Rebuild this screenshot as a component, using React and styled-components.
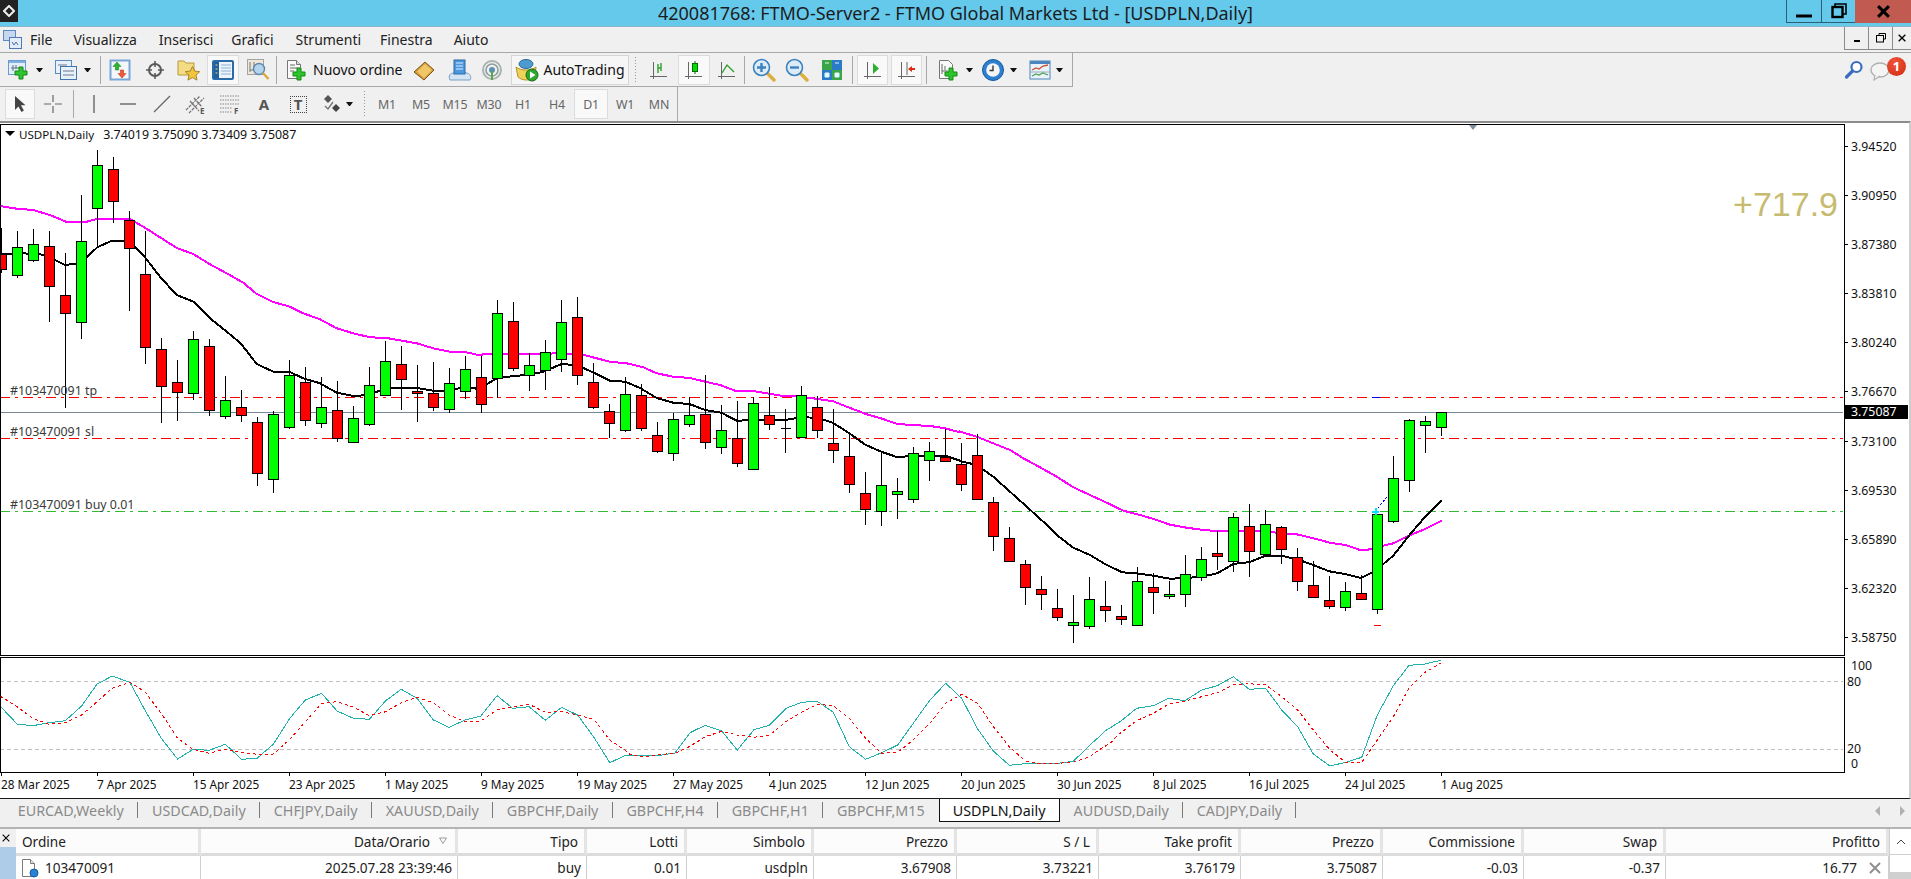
import React from 'react'
import styled, { createGlobalStyle } from 'styled-components'

const UI_FONT = '"Noto Sans", "Open Sans", sans-serif'

// candles, read as [wick top, body top, body bottom, wick bottom, colour], y in zoom units
const PART_A = [
  [295,372,418,430,'r'],[303,352,436,445,'g'],[297,343,391,395,'g'],[303,349,469,575,'r'],[369,496,550,833,'r'],
  [195,334,577,627,'g'],[60,106,235,352,'g'],[82,118,214,278,'r'],[243,271,355,543,'r'],[303,433,652,701,'r'],
  [625,658,769,878,'r'],[691,757,787,872,'r'],[603,628,790,809,'g'],[628,649,841,857,'r'],[739,811,859,866,'g'],
  [781,832,856,875,'r'],[862,877,1030,1067,'r'],[843,853,1048,1088,'g'],[691,736,892,896,'g'],[712,757,871,887,'r'],
  [742,832,880,893,'g'],[754,841,925,935,'r'],[829,865,937,938,'g'],[712,766,883,887,'g'],[634,694,796,796,'g'],
  [649,703,748,840,'r'],[706,784,790,875,'r'],[697,790,832,842,'r'],[715,760,838,848,'g'],[679,718,784,806,'g'],
]
const PART_B = [
  [258,322,403,428,'r'],[91,130,325,385,'g'],[97,154,295,302,'r'],[250,286,316,362,'g'],[211,247,301,359,'g'],
  [91,157,268,305,'g'],[82,142,316,344,'r'],[280,337,412,416,'r'],[403,424,460,505,'r'],[322,373,481,485,'g'],
  [343,376,475,482,'r'],[457,496,544,548,'r'],[430,448,550,572,'g'],[382,436,463,470,'g'],[316,433,517,536,'r'],
  [406,481,532,551,'g'],[394,505,580,590,'r'],[382,400,598,598,'g'],[352,436,463,479,'r'],[418,475,475,548,'r'],
  [349,376,502,503,'g'],[379,412,481,505,'r'],[418,520,541,578,'r'],[490,559,643,668,'r'],[607,670,718,764,'r'],
  [545,646,724,767,'g'],[625,664,673,746,'g'],[532,550,688,698,'g'],[517,544,571,632,'g'],[478,562,574,575,'r'],
]
const PART_C = [
  [190,253,313,333,'r'],[163,226,358,361,'r'],[352,367,469,512,'r'],[442,475,542,545,'r'],[541,553,622,674,'r'],
  [589,628,643,689,'r'],[628,685,712,722,'r'],[646,727,736,788,'g'],[592,658,739,746,'g'],[604,679,691,725,'r'],
  [676,709,718,734,'r'],[562,604,736,736,'g'],[580,622,637,701,'r'],[604,643,649,656,'g'],[526,583,643,680,'g'],
  [502,538,592,602,'g'],[454,520,529,571,'r'],[400,412,544,575,'g'],[373,439,514,590,'r'],[391,433,523,525,'g'],
  [439,442,508,551,'r'],[505,532,604,632,'r'],[544,616,652,655,'r'],[589,661,679,686,'r'],[607,634,682,692,'g'],
  [586,640,658,661,'r'],[403,403,688,701,'g'],[229,295,424,430,'g'],[118,121,301,335,'g'],[109,124,136,218,'g'],
  [97,97,142,167,'g'],
]

const toY = (rows, off) => rows.map(([a, b, c, d, col]) => [off + a / 3, off + b / 3, off + c / 3, off + d / 3, col])
const CANDLES = [...toY(PART_A, 130), ...toY(PART_B, 270), ...toY(PART_C, 380)]

const seg = (pts, ox, oy, sx = 3) => pts.map(([x, y]) => [ox + x / sx, oy + y / 3])
const toPoints = (pts) => pts.map(([x, y]) => `${x.toFixed(1)},${y.toFixed(1)}`).join(' ')

const MAGENTA = [
  ...seg([[0,228],[50,236],[100,240],[150,255],[200,276],[260,275],[290,267],[390,267],[430,290],[480,322],[530,354],[580,372],[630,403],[680,430],[730,458],[770,492],[820,516],[870,530],[910,550],[960,568],[1010,595],[1060,610],[1110,622],[1160,624],[1250,640],[1300,655],[1350,665],[1395,666],[1440,676]], 0, 130),
  ...seg([[0,255],[20,251],[100,252],[180,252],[230,250],[300,252],[350,265],[390,275],[440,280],[490,292],[530,310],[580,320],[630,324],[680,336],[720,345],[765,362],[820,363],[860,370],[910,378],[945,378],[990,384],[1060,394],[1100,410],[1160,433],[1200,444],[1250,461],[1300,466],[1345,467],[1395,475],[1440,487]], 480, 270),
  ...seg([[0,155],[50,170],[100,190],[150,210],[190,235],[240,262],[290,290],[340,322],[390,345],[440,368],[490,392],[540,405],[590,420],[630,434],[680,443],[730,450],[770,453],[870,453],[930,456],[980,461],[1010,463],[1060,475],[1110,488],[1160,496],[1200,510],[1220,510],[1270,497],[1300,490],[1340,470],[1400,445],[1445,422]], 960, 380),
]
const BLACK = [
  ...seg([[0,372],[35,372],[70,370],[130,374],[165,390],[195,405],[230,401],[262,380],[292,352],[335,332],[372,332],[405,350],[435,382],[480,440],[530,495],[580,515],[630,565],[680,605],[722,640],[770,702],[820,725],[868,725],[910,745],[960,760],[1010,788],[1060,798],[1108,795],[1156,775],[1252,774],[1300,782],[1348,782],[1396,770],[1440,778]], 0, 130),
  ...seg([[0,355],[50,325],[100,318],[150,314],[190,305],[245,282],[270,284],[310,294],[350,312],[390,332],[436,335],[480,354],[530,384],[580,398],[628,402],[676,420],[724,428],[772,453],[820,448],[868,450],[916,450],[964,442],[1012,443],[1060,459],[1108,490],[1156,524],[1204,545],[1250,561],[1300,558],[1348,558],[1396,557],[1440,572]], 480, 270),
  ...seg([[0,243],[50,255],[100,290],[150,335],[200,380],[250,425],[290,465],[340,503],[390,525],[440,555],[487,577],[530,580],[580,587],[630,596],[680,594],[725,590],[772,580],[820,552],[870,546],[916,527],[964,527],[1012,538],[1060,555],[1108,574],[1156,582],[1204,594],[1240,575],[1270,552],[1300,527],[1350,463],[1400,405],[1445,362]], 960, 380),
]
const STOCH_MAIN = [
  ...seg([[0,168],[42,222],[80,227],[120,218],[160,212],[200,168],[238,102],[275,78],[318,97],[355,180],[395,265],[435,327],[473,298],[512,301],[552,283],[592,328],[630,325],[670,282],[710,205],[748,150],[788,130],[826,183],[866,205],[905,208],[945,152],[983,118],[1022,145],[1062,210],[1100,232],[1140,210],[1178,198],[1218,137],[1256,175],[1296,170],[1336,211],[1376,172],[1415,195],[1455,262],[1494,338],[1533,316]], 0, 650, 2.45),
  ...seg([[0,300],[48,300],[96,300],[135,294],[180,233],[226,211],[275,228],[322,285],[372,224],[418,211],[468,160],[515,142],[562,139],[610,172],[658,275],[707,313],[755,293],[803,270],[850,205],[900,135],[947,85],[995,130],[1043,222],[1090,288],[1138,331],[1186,326],[1234,326],[1282,325],[1330,319],[1380,270]], 630, 655),
  ...seg([[0,243],[15,228],[60,200],[110,160],[160,152],[205,130],[255,137],[305,105],[352,92],[400,65],[448,103],[497,100],[545,165],[593,215],[640,297],[690,333],[737,322],[785,307],[832,180],[880,92],[927,31],[975,27],[1022,16]], 1100, 655),
]
const STOCH_SIGNAL = [
  ...seg([[0,138],[42,170],[80,205],[120,223],[160,218],[200,195],[238,155],[275,115],[318,97],[355,125],[395,190],[435,265],[473,298],[512,310],[552,297],[592,307],[630,313],[670,312],[710,268],[748,215],[788,160],[826,155],[866,172],[905,197],[945,185],[983,158],[1022,142],[1062,158],[1100,195],[1140,215],[1178,213],[1218,180],[1256,170],[1296,163],[1336,187],[1376,185],[1415,195],[1455,208],[1494,270],[1533,302]], 0, 650, 2.45),
  ...seg([[0,298],[48,306],[96,298],[135,295],[180,274],[226,245],[275,229],[322,240],[372,247],[418,241],[468,200],[515,172],[562,148],[610,152],[658,190],[707,250],[755,295],[803,292],[850,255],[900,205],[947,145],[995,118],[1043,145],[1090,215],[1138,275],[1186,318],[1234,326],[1282,325],[1330,322],[1380,305]], 630, 655),
  ...seg([[0,283],[30,265],[60,235],[110,197],[160,175],[205,148],[255,138],[305,125],[352,113],[400,90],[448,86],[497,90],[545,125],[593,165],[640,225],[690,285],[737,322],[785,322],[832,255],[880,185],[927,100],[975,52],[1022,25]], 1100, 655),
]

const PRICES = ['3.94520','3.90950','3.87380','3.83810','3.80240','3.76670','3.73100','3.69530','3.65890','3.62320','3.58750']
const DATES = ['28 Mar 2025','7 Apr 2025','15 Apr 2025','23 Apr 2025','1 May 2025','9 May 2025','19 May 2025','27 May 2025','4 Jun 2025','12 Jun 2025','20 Jun 2025','30 Jun 2025','8 Jul 2025','16 Jul 2025','24 Jul 2025','1 Aug 2025']
const TABS = ['EURCAD,Weekly','USDCAD,Daily','CHFJPY,Daily','XAUUSD,Daily','GBPCHF,Daily','GBPCHF,H4','GBPCHF,H1','GBPCHF,M15','USDPLN,Daily','AUDUSD,Daily','CADJPY,Daily']
const MENUS = ['File','Visualizza','Inserisci','Grafici','Strumenti','Finestra','Aiuto']
const MENU_GAPS = [7, 21, 22, 18, 22, 19, 21]
const PERIODS = ['M1','M5','M15','M30','H1','H4','D1','W1','MN']
const COLUMNS = [185,257,129,100,127,143,142,142,142,141,142,223]
const HEADERS = ['Ordine','Data/Orario','Tipo','Lotti','Simbolo','Prezzo','S / L','Take profit','Prezzo','Commissione','Swap','Profitto']
const ROW = ['103470091','2025.07.28 23:39:46','buy','0.01','usdpln','3.67908','3.73221','3.76179','3.75087','-0.03','-0.37','16.77']

const Global = createGlobalStyle`
  html, body { margin: 0; padding: 0; background: #f0f0f0; overflow: hidden; }
  #root { height: 879px; }
`

const Page = styled.div`
  display: flex;
  flex-direction: column;
  height: 879px;
  overflow: hidden;
  font-family: ${UI_FONT};
  color: #222;
  background: #f0f0f0;
`

const TitleBar = styled.div`
  display: grid;
  grid-template-columns: 1fr auto 1fr;
  height: 27px;
  flex: none;
  background: #65c9ec;
  border-bottom: 1px solid #8fb6c6;
  box-sizing: border-box;
`

const SysIcon = styled.div`
  width: 18px;
  height: 22px;
  background: #222;
  display: flex;
  align-items: center;
  justify-content: center;
`

const TitleText = styled.div`
  font-size: 18px;
  line-height: 26px;
  color: #1c1c1c;
  white-space: nowrap;
`

const WindowButtons = styled.div`
  display: flex;
  justify-content: flex-end;
  align-items: flex-start;
`

const WindowButton = styled.div`
  width: ${(p) => p.$w}px;
  height: 23px;
  display: flex;
  align-items: center;
  justify-content: center;
  box-sizing: border-box;
  background: ${(p) => (p.$close ? '#c15a50' : 'transparent')};
  border-left: ${(p) => (p.$close ? 'none' : '1px solid #2c5f75')};
  border-bottom: ${(p) => (p.$close ? 'none' : '1px solid #2c5f75')};
`

const MenuBar = styled.div`
  display: flex;
  align-items: center;
  height: 26px;
  flex: none;
  box-sizing: border-box;
  border-bottom: 1px solid #a8a8a8;
  padding-left: 3px;
`

const MenuItem = styled.span`
  font-size: 14px;
  line-height: 25px;
  margin-left: ${(p) => p.$gap}px;
  color: #222;
`

const MdiButtons = styled.div`
  margin-left: auto;
  display: flex;
  align-self: flex-start;
`

const MdiButton = styled.div`
  width: ${(p) => p.$w}px;
  height: 23px;
  box-sizing: border-box;
  border-left: 1px solid #8a8a8a;
  border-bottom: 1px solid #8a8a8a;
  display: flex;
  align-items: center;
  justify-content: center;
`

const ToolRow = styled.div`
  display: flex;
  align-items: stretch;
  flex: none;
  height: 34px;
  box-sizing: border-box;
`

const ToolGroup = styled.div`
  display: flex;
  align-items: center;
  height: 100%;
  box-sizing: border-box;
  padding-left: ${(p) => p.$pad || 0}px;
  width: ${(p) => p.$w}px;
  flex: none;
  border-right: 1px solid #a8a8a8;
  border-bottom: ${(p) => (p.$line ? '1px solid #a8a8a8' : 'none')};
`

const ToolBtn = styled.div`
  width: ${(p) => p.$w}px;
  height: 30px;
  margin-left: ${(p) => p.$ml || 0}px;
  flex: none;
  display: flex;
  align-items: center;
  justify-content: center;
  box-sizing: border-box;
  background: ${(p) => (p.$active ? '#f9f9f9' : 'transparent')};
  border: 1px solid ${(p) => (p.$active ? '#dcdcdc' : 'transparent')};
`

const OrderBtn = styled.div`
  display: flex;
  align-items: center;
  gap: 6px;
  flex: none;
  padding: 0 6px 0 8px;
  font-size: 14px;
  white-space: nowrap;
  color: #111;
`

const AutoBtn = styled(OrderBtn)`
  width: 118px;
  height: 30px;
  box-sizing: border-box;
  margin-left: 7px;
  gap: 4px;
  padding: 0 0 0 3px;
  background: #f6f6f6;
  border: 1px solid #d6d6d6;
`

const Caret = styled.div`
  width: 7px;
  flex: none;
  margin-left: ${(p) => p.$ml || 0}px;
  height: 0;
  border-left: 3.5px solid transparent;
  border-right: 3.5px solid transparent;
  border-top: 4px solid #111;
  box-sizing: border-box;
`

const Sep = styled.div`
  width: 1px;
  height: 28px;
  flex: none;
  background: #a8a8a8;
  margin-left: ${(p) => p.$ml || 0}px;
`

const Grip = styled.div`
  width: 4px;
  height: 28px;
  flex: none;
  margin-left: ${(p) => p.$ml || 0}px;
  margin-right: ${(p) => p.$mr || 0}px;
  background-image: radial-gradient(#9a9a9a 0.8px, transparent 0.9px);
  background-size: 3px 3px;
`

const RightIcons = styled.div`
  margin-left: auto;
  display: flex;
  align-items: center;
  gap: 6px;
  padding-right: 17px;
  position: relative;
`

const Badge = styled.span`
  position: absolute;
  right: 5px;
  top: 4px;
  width: 19px;
  height: 19px;
  border-radius: 50%;
  background: radial-gradient(circle at 40% 30%, #f0543a, #cf2a12);
  color: #fff;
  font-size: 13px;
  font-weight: 700;
  line-height: 19px;
  text-align: center;
`

const PeriodBtn = styled(ToolBtn)`
  font-size: 12.4px;
  letter-spacing: -0.2px;
  color: #666;
`

const TextGlyph = styled.span`
  font-size: 15px;
  font-weight: 700;
  color: #555;
`

const BoxGlyph = styled(TextGlyph)`
  width: 17px;
  height: 17px;
  line-height: 15px;
  text-align: center;
  box-sizing: border-box;
  border: 1px dotted #444;
`

const ChartWindow = styled.div`
  height: 678px;
  flex: none;
  box-sizing: border-box;
  display: grid;
  grid-template-columns: 1845px 1fr;
  grid-template-rows: 533px 116px 25px;
  padding-top: 1px;
  background: #fff;
  border-top: 2px solid #8c8c8c;
  border-right: 2px solid #cfcfcf;
  border-bottom: 1px solid #1a1a1a;
`

const Pane = styled.div`
  position: relative;
  background: #fff;
  box-sizing: border-box;
  border: 1px solid #000;
  overflow: hidden;
`

const MainPane = styled(Pane)`
  height: 532px;
`

const PaneSvg = styled.svg`
  position: absolute;
  left: -1px;
  top: -1px;
  display: block;
`

const ChartCaption = styled.div`
  position: absolute;
  left: 18px;
  top: 2px;
  display: flex;
  gap: 9px;
  font-size: 12.4px;
  line-height: 16px;
  white-space: pre;
  color: #111;
`

const CaptionName = styled.span`
  font-size: 11.6px;
`

const CaptionCaret = styled.div`
  position: absolute;
  left: 4px;
  top: 6px;
  border-left: 5px solid transparent;
  border-right: 5px solid transparent;
  border-top: 5px solid #000;
`

const ShiftMark = styled.div`
  position: absolute;
  left: 1468px;
  top: 0;
  border-left: 4px solid transparent;
  border-right: 4px solid transparent;
  border-top: 5px solid #7f8fa0;
`

const TradeLabel = styled.div`
  position: absolute;
  left: 9px;
  top: ${(p) => p.$top}px;
  font-size: 12.4px;
  line-height: 16px;
  color: #3a3a3a;
  white-space: nowrap;
`

const Profit = styled.div`
  position: absolute;
  right: 6px;
  top: 59px;
  font-family: "Liberation Sans", Arial, sans-serif;
  font-size: 34px;
  line-height: 40px;
  color: #c6bb70;
`

const PriceAxis = styled.div`
  position: relative;
  display: flex;
  flex-direction: column;
  margin-top: -2px;
  grid-row: 1;
  grid-column: 2;
`

const PriceRow = styled.div`
  height: 49.1px;
  flex: none;
  position: relative;
  padding-left: 6px;
  font-size: 12.3px;
  line-height: 49.1px;
  color: #111;

  &::before {
    content: '';
    position: absolute;
    left: 0;
    top: 24px;
    width: 3px;
    height: 1px;
    background: #000;
  }
`

const PriceTag = styled.div`
  position: absolute;
  left: 0;
  top: 283px;
  width: 63px;
  height: 14px;
  padding-left: 6px;
  box-sizing: border-box;
  background: #000;
  color: #fff;
  font-size: 12.3px;
  line-height: 14px;
`

const SubAxis = styled.div`
  display: grid;
  grid-template-rows: 18px 13px 54px 14px 16px;
  padding-left: 2px;
  font-size: 12.3px;
  color: #111;
  grid-row: 2;
  grid-column: 2;
`

const SubLabel = styled.div`
  line-height: 14px;
  align-self: center;
  padding-left: ${(p) => p.$pad || 0}px;
`

const DateAxis = styled.div`
  grid-row: 3;
  grid-column: 1 / span 2;
  display: flex;
  padding-left: 1px;
`

const DateCell = styled.div`
  width: 96px;
  flex: none;
  position: relative;
  font-size: 11.8px;
  line-height: 22px;
  white-space: nowrap;
  color: #111;

  &::before {
    content: '';
    position: absolute;
    left: 0;
    top: -1px;
    width: 1px;
    height: 4px;
    background: #000;
  }
`

const TabBar = styled.div`
  display: flex;
  align-items: stretch;
  height: 30px;
  flex: none;
  box-sizing: border-box;
  padding: 0 0 5px 4px;
  background: #f0f0f0;
  border-bottom: 2px solid #b4b4b4;
  position: relative;
`

const Tab = styled.div`
  position: relative;
  display: flex;
  align-items: center;
  flex: none;
  padding: 0 14.3px 0 13.8px;
  font-size: 14.3px;
  color: ${(p) => (p.$active ? '#111' : '#8a8a8a')};
  background: ${(p) => (p.$active ? '#fff' : 'transparent')};
  box-shadow: ${(p) => (p.$active ? 'inset 1px 0 #111, inset -1px 0 #111, inset 0 -1px #111' : 'none')};

  &::after {
    content: '';
    display: ${(p) => (p.$active || p.$noSep ? 'none' : 'block')};
    position: absolute;
    right: 0;
    top: 3px;
    bottom: 4px;
    width: 1px;
    background: #7a7a7a;
  }
`

const TabArrows = styled.div`
  margin-left: auto;
  display: flex;
  align-items: center;
  gap: 18px;
  padding-right: 6px;
`

const TerminalRow = styled.div`
  flex: 1;
  display: flex;
  min-height: 0;
  background: #f0f0f0;
`

const SideRail = styled.div`
  width: 16px;
  flex: none;
  display: flex;
  flex-direction: column;
`

const SideClose = styled.div`
  height: 18px;
  flex: none;
  display: flex;
  align-items: center;
  justify-content: center;
  padding-right: 4px;
`

const SideBlue = styled.div`
  flex: 1;
  background: #aecbe8;
`

const OrdersGrid = styled.div`
  display: grid;
  grid-template-columns: ${COLUMNS.map((c) => `${c}px`).join(' ')};
  grid-template-rows: 27px 1fr;
  flex: none;
  background: #fff;
`

const HeadCell = styled.div`
  display: flex;
  align-items: center;
  justify-content: ${(p) => (p.$left ? 'flex-start' : 'flex-end')};
  box-sizing: border-box;
  padding: 0 ${(p) => p.$pr || 6}px 0 6px;
  font-size: 13.6px;
  color: #222;
  background: #fcfcfc;
  border-right: 3px solid #e4e4e4;
  border-bottom: 3px solid #dcdcdc;
  position: relative;
`

const SortMark = styled.svg`
  position: absolute;
  right: 8px;
  top: 8px;
`

const BodyCell = styled.div`
  display: flex;
  align-items: center;
  justify-content: ${(p) => (p.$left ? 'flex-start' : 'flex-end')};
  gap: ${(p) => p.$gap || 5}px;
  box-sizing: border-box;
  padding: 0 ${(p) => p.$pr || 5}px 0 4px;
  font-size: 13.6px;
  line-height: 22px;
  height: 23px;
  border-right: 1px solid #cfcfcf;
`

const ScrollBar = styled.div`
  flex: 1;
  display: flex;
  flex-direction: column;
  border-left: 1px solid #cfcfcf;
  background: #fff;
`

const ScrollUp = styled.div`
  height: 25px;
  flex: none;
  display: flex;
  align-items: center;
  justify-content: center;
  border-bottom: 1px solid #cfcfcf;
`

const ScrollTrack = styled.div`
  flex: 1;
  background: linear-gradient(#fff 17px, #d0d0d0 17px);
`

/* icons */
const Ico = ({ children, s = 22, vb = 22 }) => (
  <svg width={s} height={s} viewBox={`0 0 ${vb} ${vb}`} style={{ display: 'block', flex: 'none' }}>{children}</svg>
)

const Plus = ({ x = 9, y = 9 }) => (
  <path d={`M${x + 4} ${y}h4v4h4v4h-4v4h-4v-4h-4v-4h4z`} fill="#2fc42f" stroke="#108a10" strokeWidth="1" />
)

const Axes = ({ c = '#666' }) => (
  <path d="M2 17.5H19M5.5 3V20" fill="none" stroke={c} strokeWidth="1" />
)

const IconNewChart = () => (
  <Ico>
    <rect x="0.5" y="1.5" width="17" height="14" fill="#e4eefa" stroke="#6a9ad0" />
    <rect x="1" y="2" width="16" height="2" fill="#7fb0e0" />
    <path d="M3 9H11M5 6V12M8 6V10" fill="none" stroke="#607080" />
    <Plus x={7} y={8} />
  </Ico>
)

const IconProfiles = () => (
  <Ico>
    <rect x="0.5" y="1.5" width="16" height="13" fill="#e8f0fa" stroke="#5b8cc0" />
    <rect x="5.5" y="7.5" width="16" height="13" fill="#e8f0fa" stroke="#3f76b0" />
    <path d="M3 6H12M8 12H19M8 16H19" fill="none" stroke="#6a7a8a" />
  </Ico>
)

const IconMarket = () => (
  <Ico>
    <rect x="1.5" y="1.5" width="19" height="19" fill="#f4f7fb" stroke="#7aa6d6" strokeWidth="2" />
    <path d="M8 3l4 4.5H9.6V11H6.4V7.5H4z" fill="#2db52d" stroke="#127a12" strokeWidth="0.5" />
    <path d="M13 19l-4-4.5h2.4V11h3.2v3.5H17z" fill="#ef5a3a" stroke="#b52a12" strokeWidth="0.5" />
  </Ico>
)

const IconTarget = () => (
  <Ico>
    <circle cx="11" cy="11" r="6" fill="none" stroke="#5a5a5a" strokeWidth="2" />
    <path d="M11 2V8M11 14V20M2 11H8M14 11H20" stroke="#5a5a5a" strokeWidth="1.6" />
  </Ico>
)

const IconFolderStar = () => (
  <Ico s={24} vb={24}>
    <path d="M1 3h6l2 2h8v12H1z" fill="#f3dc83" stroke="#b89a3e" />
    <path d="M15.5 8.5l2.2 4.6 5 .6-3.7 3.4 1 5-4.5-2.5-4.5 2.5 1-5-3.7-3.4 5-.6z" fill="#f2c63c" stroke="#a9842a" />
  </Ico>
)

const IconNavigator = () => (
  <Ico>
    <rect x="1" y="2" width="20" height="18" rx="1" fill="#eef4fb" stroke="#2a6aa8" strokeWidth="2" />
    <rect x="2" y="3" width="5" height="16" fill="#1f5f9e" />
    <path d="M9 6H19M9 9H19M9 12H19M9 15H19" stroke="#8ab0d8" />
    <path d="M3.5 6h2M3.5 10h2M3.5 14h2" stroke="#ffd860" />
  </Ico>
)

const IconTester = () => (
  <Ico s={24} vb={24}>
    <rect x="1.5" y="1.5" width="16" height="15" fill="#eee7da" stroke="#a3a3a3" />
    <path d="M4 4V14M4 12H15M8 4V8" stroke="#777" fill="none" />
    <circle cx="13" cy="11" r="5.5" fill="#b4d3ec" stroke="#5e86ad" strokeWidth="1.4" />
    <path d="M17 15L22.5 21" stroke="#d8a838" strokeWidth="2.4" />
  </Ico>
)

const IconOrder = () => (
  <Ico>
    <path d="M2.5 1.5h9l4 4v14h-13z" fill="#fafafa" stroke="#777" />
    <path d="M11.5 1.5v4h4" fill="#ddd" stroke="#777" />
    <path d="M5 6H10M5 9H13M5 12H9" stroke="#666" />
    <Plus x={8} y={9} />
  </Ico>
)

const IconBook = () => (
  <Ico>
    <path d="M1 13L12 3l9 8-10 10z" fill="#d79a3c" stroke="#7b5418" />
    <path d="M4 12.5L12 5l7 6-8 8z" fill="#f0c766" />
  </Ico>
)

const IconCloud = () => (
  <Ico s={24} vb={24}>
    <path d="M2 22c-2-4 0-7 4-7 1-3 10-3 12 0 4 0 6 4 4 7z" fill="#d3e4f4" stroke="#7c9fc2" />
    <rect x="6" y="2" width="11" height="14" fill="#4d97dc" stroke="#2a69a8" />
    <path d="M8 5h7M8 8h7M8 11h7" stroke="#d7ebff" />
  </Ico>
)

const IconSignal = () => (
  <Ico>
    <circle cx="11" cy="11" r="9" fill="none" stroke="#a8b4b4" strokeWidth="2" />
    <circle cx="11" cy="11" r="6" fill="none" stroke="#8f9c9c" strokeWidth="1.6" />
    <circle cx="11" cy="11" r="3" fill="#5a8fb8" />
    <path d="M11 12V21" stroke="#5aa84a" strokeWidth="2" />
  </Ico>
)

const IconAuto = () => (
  <Ico s={24} vb={24}>
    <ellipse cx="11" cy="6" rx="7" ry="4.5" fill="#4f9bd0" stroke="#2b6a9a" />
    <path d="M1 9c5 4 15 4 20 0l-1 10c-4 4-13 4-17 0z" fill="#f0d25a" stroke="#b0942a" />
    <circle cx="17" cy="17" r="6" fill="#2da72d" stroke="#166a16" />
    <path d="M15 13.5l5.5 3.5-5.5 3.5z" fill="#fff" />
  </Ico>
)

const IconBars = () => (
  <Ico>
    <Axes />
    <path d="M10 5V14M10 9h3M13 4V12" stroke="#2aa02a" strokeWidth="1.4" fill="none" />
  </Ico>
)

const IconCandle = () => (
  <Ico>
    <Axes />
    <path d="M12 2V15" stroke="#0a6a0a" />
    <rect x="9.5" y="4.5" width="5" height="8" fill="#00e000" stroke="#0a6a0a" />
  </Ico>
)

const IconLine = () => (
  <Ico>
    <Axes />
    <path d="M6 14L11 6L18 13" stroke="#2aa02a" strokeWidth="1.4" fill="none" />
  </Ico>
)

const IconZoom = ({ minus }) => (
  <Ico s={24} vb={24}>
    <path d="M14 14l8 8" stroke="#dcae3c" strokeWidth="3.4" strokeLinecap="round" />
    <circle cx="9.5" cy="9.5" r="8" fill="#dcebf8" stroke="#3c82be" strokeWidth="1.6" />
    <path d={minus ? 'M5 9.5H14' : 'M5 9.5H14M9.5 5V14'} stroke="#3c82be" strokeWidth="2.4" />
  </Ico>
)

const IconGrid = () => (
  <Ico>
    <rect x="1" y="1" width="10" height="10" fill="#3aa648" />
    <rect x="11" y="1" width="10" height="10" fill="#2a7cc8" />
    <rect x="1" y="11" width="10" height="10" fill="#2a7cc8" />
    <rect x="11" y="11" width="10" height="10" fill="#3aa648" />
    <path d="M4 4h4M14 4h4M4 14h4v4H4zM14 14h4v4h-4z" stroke="#e8f4ff" fill="#dff" />
  </Ico>
)

const IconScroll = () => (
  <Ico>
    <Axes />
    <path d="M11 4l6 5.5L11 15z" fill="#30b030" />
  </Ico>
)

const IconShift = () => (
  <Ico>
    <Axes />
    <path d="M11 3V16" stroke="#666" />
    <path d="M19 9h-3V7l-4 3 4 3v-2h3z" fill="#dd2a12" />
  </Ico>
)

const IconTemplate = () => (
  <Ico>
    <path d="M2.5 1.5h9l4 4v14h-13z" fill="#fafafa" stroke="#777" />
    <path d="M5 5V15M5 12H11M8 7V11" stroke="#666" fill="none" />
    <Plus x={8} y={9} />
  </Ico>
)

const IconClock = () => (
  <Ico s={24} vb={24}>
    <circle cx="12" cy="12" r="10.5" fill="#2d7fd0" stroke="#155a9c" />
    <circle cx="12" cy="12" r="6.8" fill="#f6f6f6" />
    <path d="M12 7.5V12.5H8.5" stroke="#333" strokeWidth="1.4" fill="none" />
  </Ico>
)

const IconPeriods = () => (
  <Ico>
    <rect x="1" y="2" width="20" height="18" fill="#eaf2fb" stroke="#4b86be" />
    <rect x="1" y="2" width="20" height="3" fill="#4b86be" />
    <path d="M3 11l4-2 3 1 4-3 5-1" stroke="#c8502a" fill="none" strokeWidth="1.3" />
    <path d="M1 13H21" stroke="#9ab" />
    <path d="M3 17l4-2 3 1 4-2 5 2" stroke="#4ea04e" fill="none" strokeWidth="1.3" />
  </Ico>
)

const IconCursor = () => (
  <Ico s={18} vb={18}>
    <path d="M4 1L4 15l3.4-3.4L10.5 17l2.4-1.4-3-5.3h4.6z" fill="#444" />
  </Ico>
)

const IconCross = () => (
  <Ico>
    <path d="M11 2V9M11 13V20M2 11H9M13 11H20" stroke="#666" strokeWidth="1.2" />
  </Ico>
)

const IconChannel = () => (
  <Ico>
    <path d="M1 17L15 3M4 20L19 5M5 8l9 10M9 5l8 9" stroke="#777" strokeWidth="1.3" strokeDasharray="3 1" />
    <text x="15" y="21" fontSize="8" fontWeight="700" fill="#555" fontFamily={UI_FONT}>E</text>
  </Ico>
)

const IconFibo = () => (
  <Ico>
    <path d="M1 3H20M1 7H20M1 11H20M1 15H13M1 19H13" stroke="#888" strokeDasharray="1.5 1" />
    <text x="15" y="21" fontSize="8" fontWeight="700" fill="#555" fontFamily={UI_FONT}>F</text>
  </Ico>
)

const IconShapes = () => (
  <Ico>
    <path d="M7 2l4 4-4 4-4-4z" fill="#555" />
    <path d="M15 11l4 4-4 4-4-4z" fill="#444" />
    <path d="M4 13l3 3 5-7" stroke="#777" strokeWidth="1.4" fill="none" />
  </Ico>
)

const IconSearch = () => (
  <Ico s={20} vb={20}>
    <circle cx="12.5" cy="7" r="5" fill="#fff" stroke="#3a6cc0" strokeWidth="2.2" />
    <path d="M8.5 11L2.5 17" stroke="#3a6cc0" strokeWidth="3.2" strokeLinecap="round" />
  </Ico>
)

const IconBubble = () => (
  <Ico s={24} vb={24}>
    <ellipse cx="10" cy="12" rx="9" ry="7" fill="#f4f4f4" stroke="#b0b0b0" strokeWidth="1.4" />
    <path d="M5 17l-1 5 6-4" fill="#f4f4f4" stroke="#b0b0b0" strokeWidth="1.2" />
  </Ico>
)

const IconDoc = () => (
  <Ico s={20} vb={20}>
    <path d="M2.5 1.5h8l4 4v13h-12z" fill="#fff" stroke="#7a7a7a" />
    <path d="M10.5 1.5v4h4" fill="#e4e4e4" stroke="#7a7a7a" />
    <circle cx="14" cy="15" r="4" fill="#2a82d4" stroke="#165a9e" />
  </Ico>
)

const XMark = ({ s = 12, w = 2, c = '#000' }) => (
  <svg width={s} height={s} viewBox="0 0 12 12" style={{ display: 'block', flex: 'none' }}>
    <path d="M1 1L11 11M11 1L1 11" stroke={c} strokeWidth={w} />
  </svg>
)

const Candle = ({ i, row }) => {
  const [wt, bt, bb, wb, col] = row
  const x = 16 * i + 1.5
  const top = Math.round(bt) + 0.5
  const h = Math.max(0, Math.round(bb) - Math.round(bt))
  return (
    <g shapeRendering="crispEdges">
      <path d={`M${x} ${Math.round(wt)}V${Math.round(wb)}`} stroke="#000" />
      <path d={`M${x - 5} ${top}h10v${h}h-10z`} fill={col === 'g' ? '#00ff00' : '#ff0000'} stroke="#000" />
    </g>
  )
}

const MainChart = () => (
  <PaneSvg width="1845" height="532" viewBox="0 124 1845 532">
    <g shapeRendering="crispEdges">
      <path d="M0 397.5H1843" stroke="#ff0000" strokeDasharray="10 5 3 5" />
      <path d="M0 412.5H1843" stroke="#778899" />
      <path d="M0 438.5H1843" stroke="#ff0000" strokeDasharray="10 5 3 5" />
      <path d="M0 511.5H1843" stroke="#33bb33" strokeDasharray="10 5 3 5" />
      <polyline points={toPoints(MAGENTA)} fill="none" stroke="#ff00ff" strokeWidth="2" />
      <polyline points={toPoints(BLACK)} fill="none" stroke="#000" strokeWidth="2" />
    </g>
    {CANDLES.map((row, i) => <Candle key={i} i={i} row={row} />)}
    <g shapeRendering="crispEdges">
      <path d="M1372 397.5h8" stroke="#0000ff" />
      <path d="M1374 625.5h7" stroke="#ff0000" />
      <path d="M1378 508L1387 497" stroke="#0000ff" strokeDasharray="2 2" />
      <path d="M1372 511.5h7M1375.5 508v7" stroke="#00e5ff" strokeWidth="2" />
    </g>
  </PaneSvg>
)

const SubChart = () => (
  <PaneSvg width="1845" height="116" viewBox="0 657 1845 116">
    <g shapeRendering="crispEdges">
      <path d="M0 681.5H1843" stroke="#c0c0c0" strokeDasharray="4 3" />
      <path d="M0 749.5H1843" stroke="#c0c0c0" strokeDasharray="4 3" />
      <polyline points={toPoints(STOCH_MAIN)} fill="none" stroke="#20b2aa" />
      <polyline points={toPoints(STOCH_SIGNAL)} fill="none" stroke="#ff0000" strokeDasharray="3 3" />
    </g>
  </PaneSvg>
)

const App = () => (
  <Page>
    <Global />
    <TitleBar>
      <SysIcon>
        <svg width="12" height="12" viewBox="0 0 12 12">
          <path d="M6 1l5 5-5 5-5-5z" fill="none" stroke="#eee" strokeWidth="2" />
          <path d="M6 3.5v5" stroke="#222" strokeWidth="1.6" />
        </svg>
      </SysIcon>
      <TitleText>420081768: FTMO-Server2 - FTMO Global Markets Ltd - [USDPLN,Daily]</TitleText>
      <WindowButtons>
        <WindowButton $w={35}>
          <svg width="16" height="14" viewBox="0 0 16 14"><path d="M0 12H16" stroke="#000" strokeWidth="3" /></svg>
        </WindowButton>
        <WindowButton $w={34}>
          <svg width="16" height="16" viewBox="0 0 16 16">
            <path d="M4 3V1H15V11H12" fill="none" stroke="#000" strokeWidth="1.6" />
            <rect x="1.5" y="4" width="10" height="10" fill="none" stroke="#000" strokeWidth="2.4" />
          </svg>
        </WindowButton>
        <WindowButton $w={56} $close>
          <XMark s={13} w={2.8} />
        </WindowButton>
      </WindowButtons>
    </TitleBar>

    <MenuBar>
      <svg width="20" height="20" viewBox="0 0 20 20">
        <rect x="0.5" y="0.5" width="12" height="10" fill="#c5d8f0" stroke="#6088c0" />
        <rect x="6.5" y="7.5" width="12" height="11" fill="#e4eefa" stroke="#5078b4" />
        <path d="M9 12l2 3 2-3 2 3" fill="none" stroke="#4a70a8" />
      </svg>
      {MENUS.map((m, i) => <MenuItem key={m} $gap={MENU_GAPS[i]}>{m}</MenuItem>)}
      <MdiButtons>
        <MdiButton $w={24}>
          <svg width="8" height="8" viewBox="0 0 8 8"><path d="M1 7H7" stroke="#000" strokeWidth="2" /></svg>
        </MdiButton>
        <MdiButton $w={24}>
          <svg width="10" height="10" viewBox="0 0 10 10">
            <path d="M3 2V0.5H9.5V6H8" fill="none" stroke="#000" />
            <rect x="0.5" y="2.5" width="7" height="6.5" fill="none" stroke="#000" />
          </svg>
        </MdiButton>
        <MdiButton $w={19}><XMark s={8} w={2} /></MdiButton>
      </MdiButtons>
    </MenuBar>

    <ToolRow>
      <ToolGroup $w={1073} $pad={4} $line>
        <ToolBtn $w={29}><IconNewChart /></ToolBtn>
        <Caret $ml={3} />
        <ToolBtn $w={36} $ml={5}><IconProfiles /></ToolBtn>
        <Caret />
        <Sep $ml={9} />
        <ToolBtn $w={38}><IconMarket /></ToolBtn>
        <ToolBtn $w={32}><IconTarget /></ToolBtn>
        <ToolBtn $w={35}><IconFolderStar /></ToolBtn>
        <ToolBtn $w={32} $ml={1} $active><IconNavigator /></ToolBtn>
        <ToolBtn $w={37}><IconTester /></ToolBtn>
        <Sep />
        <OrderBtn><IconOrder /><span>Nuovo ordine</span></OrderBtn>
        <ToolBtn $w={32}><IconBook /></ToolBtn>
        <ToolBtn $w={40}><IconCloud /></ToolBtn>
        <ToolBtn $w={24}><IconSignal /></ToolBtn>
        <AutoBtn><IconAuto /><span>AutoTrading</span></AutoBtn>
        <Grip $ml={5} />
        <ToolBtn $w={27} $ml={7}><IconBars /></ToolBtn>
        <ToolBtn $w={32} $ml={6} $active><IconCandle /></ToolBtn>
        <ToolBtn $w={34}><IconLine /></ToolBtn>
        <Sep />
        <ToolBtn $w={38}><IconZoom /></ToolBtn>
        <ToolBtn $w={28}><IconZoom minus /></ToolBtn>
        <ToolBtn $w={41}><IconGrid /></ToolBtn>
        <Sep />
        <ToolBtn $w={31} $ml={4} $active><IconScroll /></ToolBtn>
        <ToolBtn $w={31} $ml={3} $active><IconShift /></ToolBtn>
        <Sep $ml={4} />
        <ToolBtn $w={36} $ml={3}><IconTemplate /></ToolBtn>
        <Caret />
        <ToolBtn $w={35} $ml={2}><IconClock /></ToolBtn>
        <Caret />
        <ToolBtn $w={32} $ml={7}><IconPeriods /></ToolBtn>
        <Caret />
      </ToolGroup>
      <RightIcons>
        <IconSearch />
        <IconBubble />
        <Badge>1</Badge>
      </RightIcons>
    </ToolRow>

    <ToolRow>
      <ToolGroup $w={678} $pad={5}>
        <ToolBtn $w={30} $active><IconCursor /></ToolBtn>
        <ToolBtn $w={36}><IconCross /></ToolBtn>
        <Sep $ml={2} />
        <ToolBtn $w={40}>
          <svg width="4" height="18" viewBox="0 0 4 18"><path d="M2 0V18" stroke="#666" strokeWidth="1.4" /></svg>
        </ToolBtn>
        <ToolBtn $w={28}>
          <svg width="16" height="4" viewBox="0 0 16 4"><path d="M0 2H16" stroke="#666" strokeWidth="1.4" /></svg>
        </ToolBtn>
        <ToolBtn $w={40}>
          <svg width="18" height="18" viewBox="0 0 18 18"><path d="M1 17L17 1" stroke="#666" strokeWidth="1.3" /></svg>
        </ToolBtn>
        <ToolBtn $w={27}><IconChannel /></ToolBtn>
        <ToolBtn $w={42}><IconFibo /></ToolBtn>
        <ToolBtn $w={26}><TextGlyph>A</TextGlyph></ToolBtn>
        <ToolBtn $w={42}><BoxGlyph>T</BoxGlyph></ToolBtn>
        <ToolBtn $w={26}><IconShapes /></ToolBtn>
        <Caret $ml={1} />
        <Grip $ml={10} $mr={3} />
        {PERIODS.map((p) => <PeriodBtn key={p} $w={34} $active={p === 'D1'}>{p}</PeriodBtn>)}
      </ToolGroup>
    </ToolRow>

    <ChartWindow>
      <MainPane>
        <MainChart />
        <CaptionCaret />
        <ChartCaption><CaptionName>USDPLN,Daily</CaptionName><span>3.74019 3.75090 3.73409 3.75087</span></ChartCaption>
        <ShiftMark />
        <TradeLabel $top={258}>#103470091 tp</TradeLabel>
        <TradeLabel $top={299}>#103470091 sl</TradeLabel>
        <TradeLabel $top={372}>#103470091 buy 0.01</TradeLabel>
        <Profit>+717.9</Profit>
      </MainPane>
      <PriceAxis>
        {PRICES.map((p) => <PriceRow key={p}>{p}</PriceRow>)}
        <PriceTag>3.75087</PriceTag>
      </PriceAxis>
      <Pane><SubChart /></Pane>
      <SubAxis>
        <SubLabel $pad={4}>100</SubLabel>
        <SubLabel>80</SubLabel>
        <span />
        <SubLabel>20</SubLabel>
        <SubLabel $pad={4}>0</SubLabel>
      </SubAxis>
      <DateAxis>
        {DATES.map((d) => <DateCell key={d}>{d}</DateCell>)}
      </DateAxis>
    </ChartWindow>

    <TabBar>
      {TABS.map((t) => (
        <Tab key={t} $active={t === 'USDPLN,Daily'} $noSep={t === 'GBPCHF,M15'}>{t}</Tab>
      ))}
      <TabArrows>
        <svg width="6" height="10" viewBox="0 0 6 10"><path d="M5 0V10L0 5z" fill="#b0b0b0" /></svg>
        <svg width="6" height="10" viewBox="0 0 6 10"><path d="M1 0V10L6 5z" fill="#b0b0b0" /></svg>
      </TabArrows>
    </TabBar>

    <TerminalRow>
      <SideRail>
        <SideClose><XMark s={8} w={1.6} /></SideClose>
        <SideBlue />
      </SideRail>
      <OrdersGrid>
        {HEADERS.map((h, i) => (
          <HeadCell key={i} $left={i === 0} $pr={i === 1 ? 25 : 6}>
            {h}
            {i === 1 && (
              <SortMark width="8" height="8" viewBox="0 0 8 8">
                <path d="M0.5 1H7.5L4 6.5z" fill="none" stroke="#9a9a9a" />
              </SortMark>
            )}
          </HeadCell>
        ))}
        {ROW.map((c, i) => (
          <BodyCell key={i} $left={i === 0} $pr={i === 11 ? 7 : 5} $gap={i === 11 ? 12 : 5}>
            {i === 0 && <IconDoc />}
            {c}
            {i === 11 && <XMark s={12} w={2} c="#8f8f8f" />}
          </BodyCell>
        ))}
      </OrdersGrid>
      <ScrollBar>
        <ScrollUp>
          <svg width="10" height="6" viewBox="0 0 10 6"><path d="M1 5L5 1L9 5" fill="none" stroke="#444" /></svg>
        </ScrollUp>
        <ScrollTrack />
      </ScrollBar>
    </TerminalRow>
  </Page>
)

export default App
